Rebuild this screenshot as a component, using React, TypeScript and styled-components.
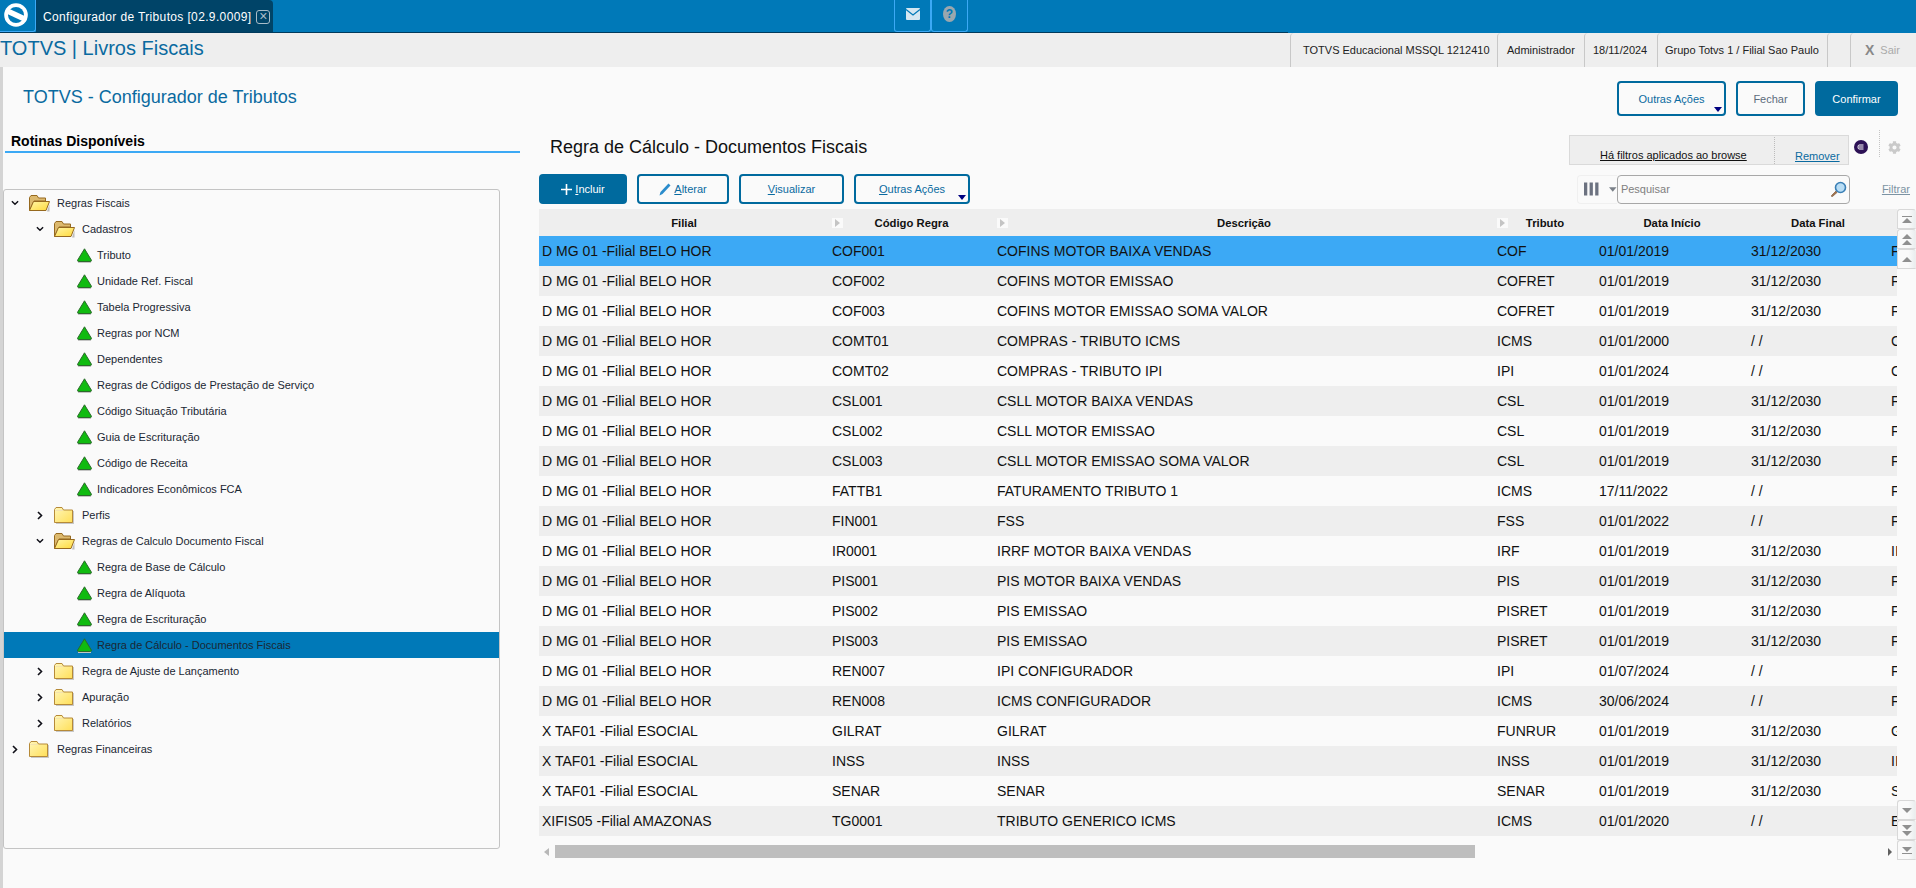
import React from 'react';
import styled, { createGlobalStyle } from 'styled-components';
import { FaCog } from 'react-icons/fa';

const Global = createGlobalStyle`
  html, body { margin: 0; padding: 0; background: #fafafa; overflow: hidden; }
  body { font-family: "Liberation Sans", Arial, sans-serif; }
  * { box-sizing: border-box; }
`;

const Page = styled.div`
  width: 1916px; height: 888px; overflow: hidden; display: flex; flex-direction: column; background: #fafafa;
`;

/* top bar */
const TopBar = styled.div`
  height: 32px; background: #0079b8; display: flex; flex: none;
`;
const LogoBox = styled.div`
  width: 36px; height: 32px; background: #0079b8; border-right: 1px solid #3ca9f5; border-bottom: 1px solid #3ca9f5;
  border-bottom-right-radius: 3px; display: flex; padding: 2px 0 0 3px;
`;
const Tab = styled.div`
  width: 237px; height: 32px; background: #004468; border-top-right-radius: 4px; display: flex; align-items: center;
  padding: 1px 0 0 7px; color: #fff; font-size: 12px; letter-spacing: 0.03em;
`;
const TabClose = styled.span`
  width: 14px; height: 14px; margin-left: 5px; border: 1px solid #a9bcc8; border-radius: 3px; color: #a9bcc8; font-size: 14px; line-height: 11px; text-align: center; letter-spacing: 0;
`;
const Shortcut = styled.div<{ $first?: boolean }>`
  width: 37px; height: 32px; margin-left: ${p => (p.$first ? '621px' : '0')}; border: 1px solid #3ca9f5; border-top: 0; border-radius: 0 0 3px 3px;
  display: flex; align-items: center; justify-content: center; padding-bottom: 4px;
`;
const HelpDot = styled.span`
  width: 13px; height: 16px; border-radius: 50%; background: #9aa7ae; color: #0079b8; font-size: 12px; font-weight: 700; line-height: 16px; text-align: center;
`;
const BarEdge = styled.div`
  height: 1px; background: #0079b8; flex: none; display: flex;
`;
const BarEdgeDark = styled.div`
  width: 1288px; background: #003a5c;
`;

/* info bar */
const InfoBar = styled.div`
  height: 34px; flex: none; background: #eeeeee; display: flex; align-items: center;
`;
const AppTitle = styled.div`
  font-size: 20px; color: #0a6aa0; line-height: 26px; margin-right: auto; margin-top: -5px;
`;
const InfoCell = styled.div<{ $w: number; $pad?: number; $muted?: boolean }>`
  width: ${p => p.$w}px; height: 34px; padding-left: ${p => p.$pad ?? 0}px; border-left: 1px solid #c8c8c8; border-top-left-radius: 4px; display: flex; align-items: center; gap: 6px;
  font-size: 11px; white-space: nowrap; color: ${p => (p.$muted ? '#aaa' : '#222')};
`;
const SairX = styled.span`
  font-size: 14px; font-weight: 700; color: #888;
`;

/* main */
const Main = styled.div`
  flex: 1; min-height: 0; border-left: 3px solid #d4d4d4; display: flex; flex-direction: column;
`;
const PageHead = styled.div`
  height: 61px; flex: none; padding: 14px 18px 0 20px; display: flex; align-items: flex-start; gap: 10px;
`;
const PageTitle = styled.h1`
  margin: 5px auto 0 0; font-size: 18px; line-height: 22px; font-weight: 400; color: #0a6aa0;
`;
const Btn = styled.button<{ $primary?: boolean; $w: number; $h?: number; $muted?: boolean }>`
  position: relative; width: ${p => p.$w}px; height: ${p => p.$h ?? 30}px; flex: none; padding: 0; margin: 0;
  display: flex; align-items: center; justify-content: center; gap: 3px;
  border: 2px solid #006a9e; border-radius: 4px; font: 11px "Liberation Sans", Arial, sans-serif;
  background: ${p => (p.$primary ? '#006a9e' : '#fafafa')};
  color: ${p => (p.$primary ? '#fff' : p.$muted ? '#5d6c7c' : '#0a6aa0')};
  u { text-underline-offset: 1px; }
`;
const BtnCaret = styled.span`
  position: absolute; right: 2px; bottom: 2px; border-left: 4px solid transparent; border-right: 4px solid transparent; border-top: 5px solid #000080;
`;

const Body = styled.div`
  flex: 1; min-height: 0; display: flex;
`;
const Left = styled.div`
  width: 536px; flex: none; display: flex; flex-direction: column;
`;
const SectionHead = styled.div`
  width: 515px; height: 25px; margin-left: 2px; padding: 5px 0 0 6px; border-bottom: 2px solid #3ca9f5; font-size: 14px; line-height: 17px; font-weight: 700; color: #000;
`;
const TreePanel = styled.div`
  width: 497px; height: 660px; margin-top: 36px; border: 1px solid #c4c4c4; border-radius: 3px; overflow: hidden;
`;
const TreeRow = styled.div<{ $indent: number; $selected?: boolean }>`
  height: 26px; padding-left: ${p => p.$indent}px; display: flex; align-items: center; font-size: 11px; color: #1b2733;
  background: ${p => (p.$selected ? '#0079b8' : 'transparent')};
`;
const Chevron = styled.span`
  width: 8px; flex: none; display: flex; justify-content: center;
`;
const FolderSlot = styled.span`
  margin-left: 10px; margin-right: 7px; width: 21px; height: 17px; flex: none; display: flex;
`;
const LeafSlot = styled.span`
  margin-right: 5px; width: 15px; height: 15px; flex: none; display: flex;
`;

const Right = styled.div`
  flex: 1; min-width: 0; display: flex; flex-direction: column;
`;
const RightTop = styled.div`
  height: 46px; flex: none; display: flex; align-items: flex-start;
`;
const GridTitle = styled.h2`
  margin: 8px auto 0 11px; font-size: 18px; line-height: 22px; font-weight: 400; color: #111;
`;
const FilterBox = styled.div`
  width: 280px; height: 30px; margin-top: 7px; background: #eeeeee; border: 1px solid #dadada; display: flex; align-items: flex-end; padding-bottom: 3px; font-size: 11px;
`;
const FilterText = styled.u`
  margin-left: 30px; width: 174px; color: #111; white-space: nowrap;
`;
const FilterRemove = styled.u`
  flex: 1; height: 27px; border-left: 1px dotted #bbb; padding: 13px 0 0 20px; color: #0a6aa0; margin-bottom: -3px;
`;
const BadgeSlot = styled.span`
  margin: 12px 0 0 5px; width: 14px; height: 14px; display: flex;
`;
const DotRule = styled.span`
  margin: 2px 0 0 11px; height: 27px; border-left: 1px dotted #c4c4c4;
`;
const GearSlot = styled.span`
  margin: 13px 15px 0 8px; color: #cacaca; display: flex;
`;
const Toolbar = styled.div`
  height: 30px; flex: none; display: flex; align-items: center; gap: 10px;
`;
const ColsBtn = styled.div`
  margin-left: auto; width: 40px; height: 29px; border: 1px solid #f0f0f0; border-right: 0; border-radius: 4px 0 0 4px; display: flex; align-items: center; padding-left: 6px; gap: 5px;
`;
const SearchBox = styled.div`
  width: 233px; height: 29px; margin-left: -10px; border: 1px solid #a8a8a8; border-radius: 4px; display: flex; align-items: center; justify-content: space-between; padding: 0 2px 0 3px;
  color: #808080; font-size: 11px;
`;
const FilterLink = styled.u`
  margin: 0 6px 0 22px; color: #7c93a3; font-size: 11px;
`;

const TableArea = styled.div`
  margin-top: 5px; flex: none; height: 651px; display: flex;
`;
const TableCol = styled.div`
  width: 1358px; flex: none; display: flex; flex-direction: column;
`;
const gridCols = '290px 165px 500px 102px 152px 140px 9px';
const HeadRow = styled.div`
  height: 27px; display: grid; grid-template-columns: ${gridCols}; background: #eeeeee; font-size: 11.3px; font-weight: 700; color: #111; align-items: center;
`;
const HeadCell = styled.div`
  display: grid; grid-template-columns: 16px 1fr 16px; align-items: center; text-align: center;
`;
const SortArrow = styled.span`
  margin-left: 3px; width: 11px; height: 10px; background: #fafafa; display: flex; align-items: center; justify-content: center;
  &::before { content: ""; border-left: 5px solid #c4c4c4; border-top: 4px solid transparent; border-bottom: 4px solid transparent; }
`;
const Row = styled.div<{ $bg: string }>`
  height: 30px; display: grid; grid-template-columns: ${gridCols}; align-items: center; background: ${p => p.$bg}; font-size: 14px; color: #111;
`;
const Cell = styled.div`
  padding-left: 3px; overflow: hidden; white-space: nowrap;
`;
const HScroll = styled.div`
  margin-top: 9px; height: 13px; display: flex; align-items: center;
`;
const HLeft = styled.span`
  margin-left: 5px; margin-right: 6px; border-right: 5px solid #b8b8b8; border-top: 4px solid transparent; border-bottom: 4px solid transparent;
`;
const HThumb = styled.span`
  width: 920px; height: 13px; background: #bebebe;
`;
const HRight = styled.span`
  margin-left: auto; margin-right: 5px; border-left: 4px solid #606060; border-top: 4px solid transparent; border-bottom: 4px solid transparent;
`;
const VScroll = styled.div`
  width: 19px; flex: none; display: flex; flex-direction: column; justify-content: space-between;
`;
const VGroup = styled.div`
  display: flex; flex-direction: column;
`;
const VBtn = styled.div`
  height: 20px; width: 19px; border: 1px solid #d8d8d8; border-right-color: #eee; border-radius: 3px 3px 0 0; background: linear-gradient(90deg, #fafafa 60%, #eaeeef); display: flex; flex-direction: column; align-items: center; justify-content: center; gap: 1px;
`;
const Tri = styled.span<{ $down?: boolean }>`
  border-left: 5px solid transparent; border-right: 5px solid transparent;
  ${p => (p.$down ? 'border-top: 5px solid #909090;' : 'border-bottom: 5px solid #909090;')}
`;
const Bar = styled.span`
  width: 10px; height: 1px; background: #909090;
`;

const FolderClosed = () => (
  <svg width="21" height="17" viewBox="0 0 21 17">
    <defs><linearGradient id="fc" x1="0" y1="0" x2="1" y2="1"><stop offset="0" stopColor="#fff6b8" /><stop offset="1" stopColor="#ffdf58" /></linearGradient></defs>
    <rect x="2" y="4" width="18" height="13" fill="#c8c8c8" />
    <path d="M.5 15.5V2.5L2 .5H8L9.5 3H18.5V15.5Z" fill="url(#fc)" stroke="#b68a38" />
    <path d="M1.5 3.5H9" stroke="#f3e3b0" />
  </svg>
);
const FolderOpen = () => (
  <svg width="21" height="17" viewBox="0 0 21 17">
    <defs><linearGradient id="fo" x1="0" y1="0" x2="1" y2="1"><stop offset="0" stopColor="#fff6a8" /><stop offset="1" stopColor="#ffd93a" /></linearGradient></defs>
    <path d="M2 16.5H18L20.5 9V16.5Z" fill="#bdbdbd" />
    <path d="M.5 15.5V2.5L2 .5H8L9.5 3H16.5V6H5Z" fill="#dcb96e" stroke="#96691f" />
    <path d="M.5 15.5L4.5 6.5H20.5L17 15.5Z" fill="url(#fo)" stroke="#96691f" />
  </svg>
);
const GreenTri = () => (
  <svg width="15" height="15" viewBox="0 0 15 15">
    <rect x="1" y="13" width="13" height="2" fill="#c4c4c4" />
    <path d="M7.5 .8L14.3 12Q14.7 13.5 13.2 13.5H1.8Q.3 13.5 .7 12Z" fill="#10bb10" stroke="#2c6a2c" />
  </svg>
);
const ChevDown = () => (
  <svg width="9" height="6" viewBox="0 0 9 6"><path d="M1 1L4.5 4.5L8 1" fill="none" stroke="#101018" strokeWidth="1.6" /></svg>
);
const ChevRight = () => (
  <svg width="6" height="9" viewBox="0 0 6 9"><path d="M1 1L4.5 4.5L1 8" fill="none" stroke="#101018" strokeWidth="1.6" /></svg>
);
const Logo = () => (
  <svg width="26" height="26" viewBox="0 0 26 26">
    <circle cx="13" cy="13" r="11.8" fill="#fff" />
    <circle cx="13" cy="13" r="8" fill="#0079b8" />
    <path d="M5.5 9.5L20.5 16.5" stroke="#fff" strokeWidth="5.5" strokeLinecap="round" />
  </svg>
);
const Mail = () => (
  <svg width="14" height="12" viewBox="0 0 14 12"><rect width="14" height="12" rx="1" fill="#d5e7f1" /><path d="M0 1.5L7 7L14 1.5" fill="none" stroke="#0079b8" strokeWidth="1.3" /></svg>
);
const Plus = () => (
  <svg width="11" height="11" viewBox="0 0 11 11"><path d="M5.5 0V11M0 5.5H11" stroke="#fff" strokeWidth="1.6" /></svg>
);
const Pencil = () => (
  <svg width="12" height="13" viewBox="0 0 12 13"><path d="M.5 12.5L1.5 9L9.5 .5L11.5 2.5L3.5 11Z" fill="#2a8ccc" /></svg>
);
const ColsIcon = () => (
  <svg width="22" height="14" viewBox="0 0 22 14">
    <path d="M0 0H3.5V14H0ZM6 0H9.5V14H6ZM12 0H15.5V14H12Z" fill="#6c7280" />
  </svg>
);
const Caret = () => (
  <svg width="8" height="5" viewBox="0 0 8 5"><path d="M0 0H8L4 5Z" fill="#7a8088" /></svg>
);
const Lens = () => (
  <svg width="17" height="17" viewBox="0 0 17 17">
    <path d="M6 10L1.5 14.5Q1 15.8 2.5 15.5L7 11.5Z" fill="#a5744a" stroke="#6e4a30" strokeWidth=".6" />
    <circle cx="10.5" cy="6.5" r="5" fill="#b8ddf5" stroke="#3a7fb5" strokeWidth="1.6" />
  </svg>
);
const Badge = () => (
  <svg width="14" height="14" viewBox="0 0 14 14">
    <circle cx="7" cy="7" r="7" fill="#2c1155" />
    <path d="M9.5 5H5Q4 5 4 7T5 9H9.5M5 7H9.5" fill="none" stroke="#fff" strokeWidth="1" />
  </svg>
);

type Node = { label: string; level: 0 | 1 | 2; open?: boolean; selected?: boolean };
const tree: Node[] = [
  { label: 'Regras Fiscais', level: 0, open: true },
  { label: 'Cadastros', level: 1, open: true },
  { label: 'Tributo', level: 2 },
  { label: 'Unidade Ref. Fiscal', level: 2 },
  { label: 'Tabela Progressiva', level: 2 },
  { label: 'Regras por NCM', level: 2 },
  { label: 'Dependentes', level: 2 },
  { label: 'Regras de Códigos de Prestação de Serviço', level: 2 },
  { label: 'Código Situação Tributária', level: 2 },
  { label: 'Guia de Escrituração', level: 2 },
  { label: 'Código de Receita', level: 2 },
  { label: 'Indicadores Econômicos FCA', level: 2 },
  { label: 'Perfis', level: 1 },
  { label: 'Regras de Calculo Documento Fiscal', level: 1, open: true },
  { label: 'Regra de Base de Cálculo', level: 2 },
  { label: 'Regra de Alíquota', level: 2 },
  { label: 'Regra de Escrituração', level: 2 },
  { label: 'Regra de Cálculo - Documentos Fiscais', level: 2, selected: true },
  { label: 'Regra de Ajuste de Lançamento', level: 1 },
  { label: 'Apuração', level: 1 },
  { label: 'Relatórios', level: 1 },
  { label: 'Regras Financeiras', level: 0 },
];

const MG = 'D MG 01 -Filial BELO HOR';
const TAF = 'X TAF01 -Filial ESOCIAL';
const rows: string[][] = [
  [MG, 'COF001', 'COFINS MOTOR BAIXA VENDAS', 'COF', '01/01/2019', '31/12/2030', 'F'],
  [MG, 'COF002', 'COFINS MOTOR EMISSAO', 'COFRET', '01/01/2019', '31/12/2030', 'F'],
  [MG, 'COF003', 'COFINS MOTOR EMISSAO SOMA VALOR', 'COFRET', '01/01/2019', '31/12/2030', 'F'],
  [MG, 'COMT01', 'COMPRAS - TRIBUTO ICMS', 'ICMS', '01/01/2000', '/ /', 'C'],
  [MG, 'COMT02', 'COMPRAS - TRIBUTO IPI', 'IPI', '01/01/2024', '/ /', 'C'],
  [MG, 'CSL001', 'CSLL MOTOR BAIXA VENDAS', 'CSL', '01/01/2019', '31/12/2030', 'F'],
  [MG, 'CSL002', 'CSLL MOTOR EMISSAO', 'CSL', '01/01/2019', '31/12/2030', 'F'],
  [MG, 'CSL003', 'CSLL MOTOR EMISSAO SOMA VALOR', 'CSL', '01/01/2019', '31/12/2030', 'F'],
  [MG, 'FATTB1', 'FATURAMENTO TRIBUTO 1', 'ICMS', '17/11/2022', '/ /', 'F'],
  [MG, 'FIN001', 'FSS', 'FSS', '01/01/2022', '/ /', 'F'],
  [MG, 'IR0001', 'IRRF MOTOR BAIXA VENDAS', 'IRF', '01/01/2019', '31/12/2030', 'II'],
  [MG, 'PIS001', 'PIS MOTOR BAIXA VENDAS', 'PIS', '01/01/2019', '31/12/2030', 'F'],
  [MG, 'PIS002', 'PIS EMISSAO', 'PISRET', '01/01/2019', '31/12/2030', 'F'],
  [MG, 'PIS003', 'PIS EMISSAO', 'PISRET', '01/01/2019', '31/12/2030', 'F'],
  [MG, 'REN007', 'IPI CONFIGURADOR', 'IPI', '01/07/2024', '/ /', 'F'],
  [MG, 'REN008', 'ICMS CONFIGURADOR', 'ICMS', '30/06/2024', '/ /', 'F'],
  [TAF, 'GILRAT', 'GILRAT', 'FUNRUR', '01/01/2019', '31/12/2030', 'G'],
  [TAF, 'INSS', 'INSS', 'INSS', '01/01/2019', '31/12/2030', 'II'],
  [TAF, 'SENAR', 'SENAR', 'SENAR', '01/01/2019', '31/12/2030', 'S'],
  ['XIFIS05 -Filial AMAZONAS', 'TG0001', 'TRIBUTO GENERICO ICMS', 'ICMS', '01/01/2020', '/ /', 'E'],
];

const head: { label: string; arrow?: boolean }[] = [
  { label: 'Filial' },
  { label: 'Código Regra', arrow: true },
  { label: 'Descrição', arrow: true },
  { label: 'Tributo', arrow: true },
  { label: 'Data Início' },
  { label: 'Data Final' },
  { label: '' },
];

const rowBg = (i: number) => (i === 0 ? '#3ca9f5' : i % 2 === 1 ? '#eeeeee' : '#fafafa');

export default function App() {
  return (
    <Page>
      <Global />
      <TopBar>
        <LogoBox><Logo /></LogoBox>
        <Tab>Configurador de Tributos [02.9.0009]<TabClose>×</TabClose></Tab>
        <Shortcut $first><Mail /></Shortcut>
        <Shortcut><HelpDot>?</HelpDot></Shortcut>
      </TopBar>
      <BarEdge><BarEdgeDark /></BarEdge>
      <InfoBar>
        <AppTitle>TOTVS | Livros Fiscais</AppTitle>
        <InfoCell $w={207} $pad={12}>TOTVS Educacional MSSQL 1212410</InfoCell>
        <InfoCell $w={87} $pad={9}>Administrador</InfoCell>
        <InfoCell $w={73} $pad={8}>18/11/2024</InfoCell>
        <InfoCell $w={170} $pad={7}>Grupo Totvs 1 / Filial Sao Paulo</InfoCell>
        <InfoCell $w={23} />
        <InfoCell $w={66} $pad={14} $muted><SairX>X</SairX><span>Sair</span></InfoCell>
      </InfoBar>
      <Main>
        <PageHead>
          <PageTitle>TOTVS - Configurador de Tributos</PageTitle>
          <Btn $w={109} $h={35}>Outras Ações<BtnCaret /></Btn>
          <Btn $w={69} $h={35} $muted>Fechar</Btn>
          <Btn $w={83} $h={35} $primary>Confirmar</Btn>
        </PageHead>
        <Body>
          <Left>
            <SectionHead>Rotinas Disponíveis</SectionHead>
            <TreePanel>
              {tree.map(n =>
                n.level === 2 ? (
                  <TreeRow key={n.label} $indent={73} $selected={n.selected}>
                    <LeafSlot><GreenTri /></LeafSlot>{n.label}
                  </TreeRow>
                ) : (
                  <TreeRow key={n.label} $indent={n.level === 0 ? 7 : 32}>
                    <Chevron>{n.open ? <ChevDown /> : <ChevRight />}</Chevron>
                    <FolderSlot>{n.open ? <FolderOpen /> : <FolderClosed />}</FolderSlot>
                    {n.label}
                  </TreeRow>
                )
              )}
            </TreePanel>
          </Left>
          <Right>
            <RightTop>
              <GridTitle>Regra de Cálculo - Documentos Fiscais</GridTitle>
              <FilterBox>
                <FilterText>Há filtros aplicados ao browse</FilterText>
                <FilterRemove>Remover</FilterRemove>
              </FilterBox>
              <BadgeSlot><Badge /></BadgeSlot>
              <DotRule />
              <GearSlot><FaCog size={13} /></GearSlot>
            </RightTop>
            <Toolbar>
              <Btn $w={88} $primary><Plus /><span><u>I</u>ncluir</span></Btn>
              <Btn $w={92}><Pencil /><span><u>A</u>lterar</span></Btn>
              <Btn $w={105}><span><u>V</u>isualizar</span></Btn>
              <Btn $w={116}><span><u>O</u>utras Ações</span><BtnCaret /></Btn>
              <ColsBtn><ColsIcon /><Caret /></ColsBtn>
              <SearchBox>Pesquisar<Lens /></SearchBox>
              <FilterLink>Filtrar</FilterLink>
            </Toolbar>
            <TableArea>
              <TableCol>
                <HeadRow>
                  {head.map(h => (
                    <HeadCell key={h.label}>
                      {h.arrow ? <SortArrow /> : <span />}
                      <span>{h.label}</span>
                      <span />
                    </HeadCell>
                  ))}
                </HeadRow>
                {rows.map((r, i) => (
                  <Row key={r[1]} $bg={rowBg(i)}>
                    {r.map((c, j) => <Cell key={j}>{c}</Cell>)}
                  </Row>
                ))}
                <HScroll><HLeft /><HThumb /><HRight /></HScroll>
              </TableCol>
              <VScroll>
                <VGroup>
                  <VBtn><Bar /><Tri /></VBtn>
                  <VBtn><Tri /><Tri /></VBtn>
                  <VBtn><Tri /></VBtn>
                </VGroup>
                <VGroup>
                  <VBtn><Tri $down /></VBtn>
                  <VBtn><Tri $down /><Tri $down /></VBtn>
                  <VBtn><Tri $down /><Bar /></VBtn>
                </VGroup>
              </VScroll>
            </TableArea>
          </Right>
        </Body>
      </Main>
    </Page>
  );
}
